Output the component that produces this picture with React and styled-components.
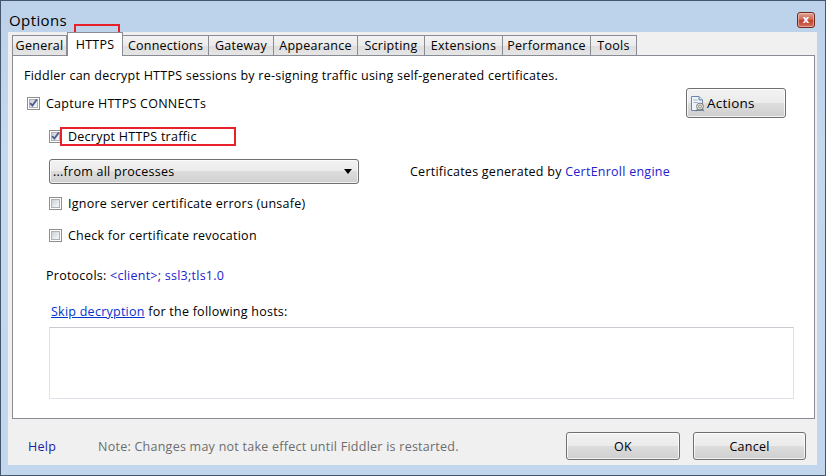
import React from "react";
import styled, { createGlobalStyle } from "styled-components";

const GlobalStyle = createGlobalStyle`
  html, body { margin: 0; padding: 0; background: #ffffff; }
  body {
    font-family: "Open Sans", "Noto Sans", sans-serif;
    font-size: 12.5px;
    letter-spacing: 0.25px;
    color: #000;
  }
  * { box-sizing: border-box; }
`;

const Window = styled.div`
  position: relative;
  width: 826px;
  height: 476px;
  border: 1px solid #44556c;
  background: linear-gradient(to bottom, #bcd2ea 0%, #c4d8ee 30%, #c2d7ee 100%);
  display: flex;
  flex-direction: column;
`;

const TitleBar = styled.div`
  height: 31px;
  display: flex;
  align-items: flex-start;
  justify-content: space-between;
  padding: 0 10px 0 8px;
`;

const Title = styled.div`
  font-size: 15px;
  letter-spacing: 0.4px;
  line-height: 20px;
  margin-top: 9px;
  color: #000;
`;

const CloseButton = styled.div`
  margin-top: 11px;
  width: 18px;
  height: 16px;
  border: 1px solid #6e2a22;
  border-radius: 3px;
  background: linear-gradient(to bottom, #e0a293 0%, #cf6a5a 45%, #c0402f 55%, #d4715f 100%);
  color: #fff;
  font-family: "DejaVu Sans", sans-serif;
  font-weight: bold;
  font-size: 10px;
  letter-spacing: 0;
  line-height: 13px;
  text-align: center;
  box-shadow: inset 0 0 0 1px rgba(255, 220, 210, 0.5);
`;

const Client = styled.div`
  flex: 1;
  margin: 0 8px 10px 7px;
  background: #f0f0f0;
  display: flex;
  flex-direction: column;
  padding: 0 2px 0 4px;
`;

const TabStrip = styled.div`
  height: 23px;
  display: flex;
  align-items: flex-end;
  position: relative;
  z-index: 1;
`;

const Tab = styled.div`
  width: ${(p) => p.$w}px;
  height: ${(p) => (p.$active ? 24 : 20)}px;
  margin-bottom: ${(p) => (p.$active ? -1 : 0)}px;
  border: 1px solid #898c95;
  border-bottom: none;
  border-left-width: ${(p) => (p.$first || p.$active ? 1 : 0)}px;
  background: ${(p) =>
    p.$active
      ? "#ffffff"
      : "linear-gradient(to bottom, #f3f3f3 0%, #ebebeb 50%, #dedede 51%, #e5e5e5 100%)"};
  display: flex;
  align-items: center;
  justify-content: center;
  white-space: nowrap;
  line-height: 16px;
`;

const Panel = styled.div`
  height: 364px;
  border: 1px solid #898c95;
  background: #ffffff;
  display: flex;
  flex-direction: column;
`;

const Row = styled.div`
  margin-top: ${(p) => p.$mt}px;
  height: ${(p) => p.$h}px;
  padding-left: ${(p) => p.$indent}px;
  padding-right: ${(p) => p.$right || 0}px;
  display: flex;
  align-items: center;
  justify-content: ${(p) => (p.$spread ? "space-between" : "flex-start")};
  white-space: nowrap;
  position: relative;
`;

const CheckLabel = styled.label`
  display: flex;
  align-items: center;
  gap: 6px;
  align-self: ${(p) => (p.$top ? "flex-start" : "center")};
  margin-top: ${(p) => (p.$top ? 7 : 0)}px;
`;

const Box = styled.span`
  width: 13px;
  height: 13px;
  border: 1px solid #8e8f8f;
  background: #ffffff;
  padding: 1px;
  display: inline-flex;
  flex: none;
`;

const BoxInner = styled.span`
  flex: 1;
  border: 1px solid #aeb3b9;
  background: linear-gradient(135deg, #cbcfd5 0%, #e7e9ec 60%, #f6f6f6 100%);
  position: relative;
`;

const CheckMark = styled.svg`
  position: absolute;
  left: -1px;
  top: -2px;
`;

const Check = ({ checked }) => (
  <Box>
    <BoxInner>
      {checked && (
        <CheckMark width="9" height="10" viewBox="0 0 9 10">
          <path d="M1.2 5.2 L3.4 7.6 L7.8 1.4" fill="none" stroke="#4a5d8e" strokeWidth="1.8" />
        </CheckMark>
      )}
    </BoxInner>
  </Box>
);

const WinButton = styled.div`
  width: ${(p) => p.$w}px;
  height: ${(p) => p.$h}px;
  margin-left: ${(p) => p.$ml || 0}px;
  border: 1px solid #707070;
  border-radius: 3px;
  background: linear-gradient(to bottom, #f2f2f2 0%, #ebebeb 49%, #dddddd 50%, #cfcfcf 100%);
  box-shadow: inset 0 0 0 1px rgba(255, 255, 255, 0.75);
  display: flex;
  align-items: center;
  justify-content: ${(p) => (p.$left ? "flex-start" : "center")};
  padding-left: ${(p) => (p.$left ? 2 : 0)}px;
  font-size: ${(p) => p.$fs || 12.5}px;
  flex: none;
`;

const ActionIcon = styled.svg`
  flex: none;
  margin-right: 1px;
`;

const Combo = styled.div`
  width: 310px;
  height: 25px;
  border: 1px solid #707070;
  border-radius: 3px;
  background: linear-gradient(to bottom, #f2f2f2 0%, #ebebeb 49%, #dddddd 50%, #cfcfcf 100%);
  box-shadow: inset 0 0 0 1px rgba(255, 255, 255, 0.7);
  display: flex;
  align-items: center;
  justify-content: space-between;
  padding: 0 6px 0 3px;
  margin-right: 51px;
`;

const Arrow = styled.span`
  width: 0;
  height: 0;
  border-left: 4px solid transparent;
  border-right: 4px solid transparent;
  border-top: 5px solid #000;
`;

const Blue = styled.span`
  color: ${(p) => p.$c || "#2222cc"};
  text-decoration: ${(p) => (p.$u ? "underline" : "none")};
`;

const HostBox = styled.div`
  margin-top: ${(p) => p.$mt}px;
  margin-left: 36px;
  width: 745px;
  height: 72px;
  border: 1px solid #e2e3ea;
  border-top-color: #c9cbd3;
  background: #ffffff;
`;

const Footer = styled.div`
  flex: 1;
  display: flex;
  align-items: flex-start;
  padding: 13px 9px 0 16px;
`;

const FooterText = styled.div`
  height: 28px;
  display: flex;
  align-items: center;
  color: ${(p) => p.$c};
  width: ${(p) => p.$w}px;
  flex: none;
`;

const Spacer = styled.div`
  flex: 1;
`;

const Highlight = styled.div`
  position: absolute;
  border: 2px solid #e8202a;
  pointer-events: none;
  left: ${(p) => p.$x}px;
  top: ${(p) => p.$y}px;
  width: ${(p) => p.$w}px;
  height: ${(p) => p.$h}px;
`;

const tabs = [
  { label: "General", w: 55 },
  { label: "HTTPS", w: 56, active: true },
  { label: "Connections", w: 86 },
  { label: "Gateway", w: 65 },
  { label: "Appearance", w: 84 },
  { label: "Scripting", w: 67 },
  { label: "Extensions", w: 78 },
  { label: "Performance", w: 88 },
  { label: "Tools", w: 46 },
];

export default function App() {
  return (
    <>
      <GlobalStyle />
      <Window>
        <TitleBar>
          <Title>Options</Title>
          <CloseButton>x</CloseButton>
        </TitleBar>
        <Client>
          <TabStrip>
            {tabs.map((t, i) => (
              <Tab key={t.label} $w={t.w} $active={t.active} $first={i === 0}>
                {t.label}
              </Tab>
            ))}
          </TabStrip>
          <Panel>
            <Row $mt={10} $h={18} $indent={11}>
              Fiddler can decrypt HTTPS sessions by re-signing traffic using self-generated certificates.
            </Row>
            <Row $mt={4} $h={30} $indent={14} $right={28} $spread>
              <CheckLabel $top>
                <Check checked />
                Capture HTTPS CONNECTs
              </CheckLabel>
              <WinButton $w={100} $h={30} $left $fs={13.5}>
                <ActionIcon width="17" height="17" viewBox="0 0 17 17">
                  <path d="M2.5 1.5 H10 L13.5 5 V15.5 H2.5 Z" fill="#eef4fb" stroke="#6b86a8" />
                  <path d="M10 1.5 V5 H13.5" fill="#cfdcec" stroke="#6b86a8" />
                  <path d="M4.5 5 H8.5 M4.5 7.5 H9" stroke="#9fb3cc" />
                  <circle cx="11" cy="11.5" r="3.4" fill="#f4f1e4" stroke="#6a6a6a" strokeWidth="0.9" />
                  <circle cx="11" cy="11.5" r="1.5" fill="none" stroke="#6a6a6a" strokeWidth="0.8" />
                  <path d="M8.4 14 L7.2 16.3 M13.6 14 L14.8 16.3" stroke="#6a6a6a" strokeWidth="0.9" />
                </ActionIcon>
                Actions
              </WinButton>
            </Row>
            <Row $mt={9} $h={19} $indent={36}>
              <CheckLabel>
                <Check checked />
                Decrypt HTTPS traffic
              </CheckLabel>
              <Highlight $x={47} $y={0} $w={176} $h={19} />
            </Row>
            <Row $mt={13} $h={25} $indent={36}>
              <Combo>
                <span>...from all processes</span>
                <Arrow />
              </Combo>
              <span>
                Certificates generated by <Blue>CertEnroll engine</Blue>
              </span>
            </Row>
            <Row $mt={9} $h={20} $indent={36}>
              <CheckLabel>
                <Check />
                Ignore server certificate errors (unsafe)
              </CheckLabel>
            </Row>
            <Row $mt={12} $h={20} $indent={36}>
              <CheckLabel>
                <Check />
                Check for certificate revocation
              </CheckLabel>
            </Row>
            <Row $mt={20} $h={20} $indent={33}>
              Protocols:&nbsp;<Blue>&lt;client&gt;; ssl3;tls1.0</Blue>
            </Row>
            <Row $mt={16} $h={20} $indent={38}>
              <Blue $c="#0033cc" $u>Skip decryption</Blue>&nbsp;for the following hosts:
            </Row>
            <HostBox $mt={6} />
          </Panel>
          <Footer>
            <FooterText $c="#1c1caa" $w={70}>Help</FooterText>
            <FooterText $c="#6d6d6d">
              Note: Changes may not take effect until Fiddler is restarted.
            </FooterText>
            <Spacer />
            <WinButton $w={114} $h={28}>OK</WinButton>
            <WinButton $w={113} $h={28} $ml={13}>Cancel</WinButton>
          </Footer>
        </Client>
        <Highlight $x={73} $y={23} $w={46} $h={24} />
      </Window>
    </>
  );
}
